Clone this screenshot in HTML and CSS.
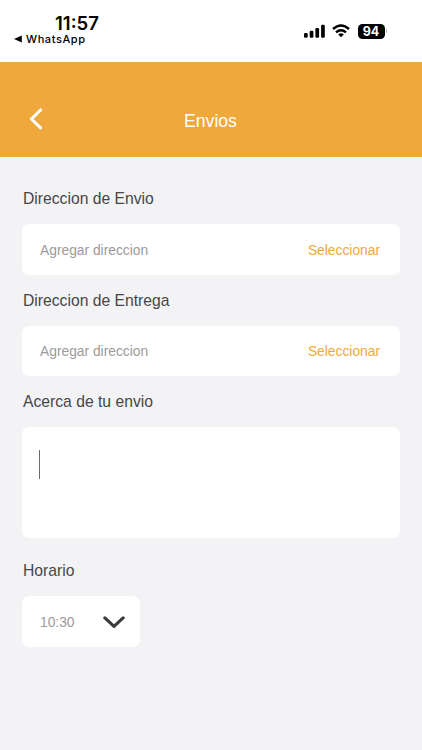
FILE: index.html
```html
<!DOCTYPE html>
<html lang="es">
<head>
  <meta charset="UTF-8">
  <meta name="viewport" content="width=device-width, initial-scale=1.0">
  <title>Envios</title>
  <link rel="stylesheet" href="styles.css">
</head>
<body>
  <div class="status-bar">
    <div class="status-left">
      <div class="time">11:57</div>
      <div class="back-app">
        <svg width="8" height="8" viewBox="0 0 8 8"><path d="M0 4L7.8 0.4V7.6Z" fill="#000"/></svg>
        <span>WhatsApp</span>
      </div>
    </div>
    <div class="status-right">
      <svg class="signal" width="22" height="14" viewBox="0 0 22 14">
        <rect x="0" y="9" width="3.7" height="4.7" rx="1.2"/>
        <rect x="5.7" y="6.7" width="3.7" height="7" rx="1.2"/>
        <rect x="11.4" y="4" width="3.7" height="9.7" rx="1.2"/>
        <rect x="17.1" y="0.8" width="3.7" height="12.9" rx="1.2"/>
      </svg>
      <svg class="wifi" width="18" height="14" viewBox="0 0 18 14">
        <path d="M1 5Q9 -2 17 5M4 8.3Q9 4 14 8.3" fill="none" stroke="#000" stroke-width="2.4"/>
        <path d="M6.2 10.4Q9 8.2 11.8 10.4L9 13.3Z"/>
      </svg>
      <div class="battery">94</div>
      <div class="battery-tip"></div>
    </div>
  </div>

  <header class="header">
    <button class="back" type="button" aria-label="Volver">
      <svg width="14" height="22" viewBox="0 0 14 22"><path d="M11.6 2L2.4 11L11.6 19.8" fill="none" stroke="#fff" stroke-width="3.1" stroke-linecap="round" stroke-linejoin="round"/></svg>
    </button>
    <h1>Envios</h1>
  </header>

  <main class="form-section">
    <h2>Direccion de Envio</h2>
    <div class="card">
      <span class="placeholder">Agregar direccion</span>
      <a class="select-link">Seleccionar</a>
    </div>

    <h2>Direccion de Entrega</h2>
    <div class="card">
      <span class="placeholder">Agregar direccion</span>
      <a class="select-link">Seleccionar</a>
    </div>

    <h2>Acerca de tu envio</h2>
    <div class="card about">
      <span class="cursor"></span>
    </div>

    <h2>Horario</h2>
    <div class="card schedule">
      <span class="placeholder">10:30</span>
      <svg width="22" height="14" viewBox="0 0 22 14"><path d="M1.9 2.9L11 11.4L20.1 2.9" fill="none" stroke="#3c3c3e" stroke-width="3.2" stroke-linecap="round" stroke-linejoin="round"/></svg>
    </div>
  </main>
</body>
</html>
```
FILE: styles.css
```css
* {
  box-sizing: border-box;
}

body {
  margin: 0;
  height: 100vh;
  overflow: hidden;
  font-family: "Liberation Sans", Arial, sans-serif;
  background-color: #f3f3f6;
}

/* status bar */
.status-bar {
  display: flex;
  justify-content: space-between;
  height: 62px;
  padding: 13px 35px 0 14px;
  background-color: #fff;
  font-family: Inter, sans-serif;
  color: #000;
}

.time {
  margin-left: 41px;
  font-size: 18.5px;
  font-weight: 600;
  line-height: 20px;
}

.back-app {
  display: flex;
  align-items: center;
  gap: 4px;
  font-size: 11px;
  font-weight: 500;
  line-height: 12px;
  letter-spacing: 0.6px;
}

.status-right {
  display: flex;
  align-items: center;
  height: 36px;
}

.wifi {
  margin: 0 8px 0 6px;
}

.battery {
  width: 27px;
  height: 15px;
  border-radius: 4.5px;
  background-color: #000;
  color: #fff;
  font-size: 12.5px;
  font-weight: 700;
  line-height: 15px;
  text-align: center;
}

.battery-tip {
  width: 1.5px;
  height: 4px;
  margin-left: 1px;
  border-radius: 0 2px 2px 0;
  background-color: #b5b5b5;
}

/* header */
.header {
  display: grid;
  grid-template-columns: 1fr auto 1fr;
  align-items: center;
  height: 95px;
  padding: 19px 30px 0 29px;
  background-color: #efa83c;
  color: #fff;
}

.back {
  display: flex;
  padding: 0;
  border: none;
  background: none;
}

h1 {
  margin: 3px 0 0;
  font-size: 17.6px;
  font-weight: 400;
  line-height: 22px;
}

/* form */
.form-section {
  padding: 31px 22px 0;
}

h2 {
  margin: 0 1px 14px;
  font-size: 15.7px;
  font-weight: 400;
  line-height: 22px;
  color: #464648;
}

.card {
  display: flex;
  justify-content: space-between;
  align-items: center;
  height: 50.6px;
  margin-bottom: 15px;
  padding: 1px 20px 0 18px;
  border-radius: 7px;
  background-color: #fff;
  font-size: 13.8px;
}

.placeholder,
.select-link {
  padding-top: 1px;
}

.placeholder {
  color: #9b9b9b;
}

.select-link {
  color: #efa83c;
}

.about {
  align-items: flex-start;
  height: 111px;
  margin-bottom: 22px;
  padding: 23px 17px;
}

.cursor {
  width: 1px;
  height: 29px;
  background-color: #6a6a6a;
}

.schedule {
  width: 118px;
  padding-right: 15px;
}
```
